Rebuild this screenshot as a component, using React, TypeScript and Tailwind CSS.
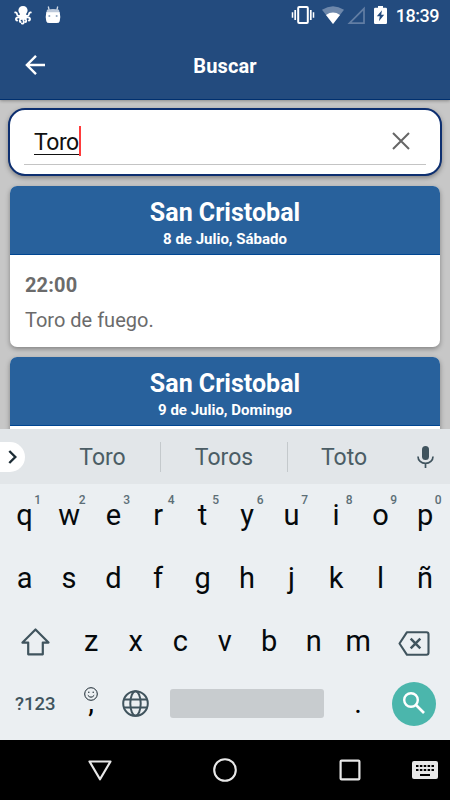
import React from 'react';

interface EventCardProps {
  title: string;
  date: string;
  time?: string;
  description?: string;
}

interface KeyProps {
  label: string;
  hint?: string;
}

const topRow = ['q', 'w', 'e', 'r', 't', 'y', 'u', 'i', 'o', 'p'];
const homeRow = ['a', 's', 'd', 'f', 'g', 'h', 'j', 'k', 'l', 'ñ'];
const bottomRow = ['z', 'x', 'c', 'v', 'b', 'n', 'm'];

const OctopusIcon = () => (
  <svg className="h-5 w-[18px]" viewBox="0 0 18 20" fill="none" stroke="#fff" strokeWidth="1.800" strokeLinecap="round">
    <path d="M9 1C6.200 1 4.400 3 4.400 5.300c0 1.700 1.100 2.700 1.500 4L4.300 12.500 7 15l2-.8 2 .8 2.700-2.500L12.100 9.300c.4-1.300 1.500-2.300 1.500-4C13.600 3 11.800 1 9 1z" fill="#fff" stroke="none" />
    <path d="M6 10.800C4 11.300 3 10.300 3 9c0-1-.6-1.700-1.800-1.500M12 10.800c2 .5 3-.5 3-1.800 0-1 .6-1.700 1.800-1.500" />
    <path d="M5.500 12.300c-1.500.3-2.500-.1-3.200.8-.8 1-.2 2.200.8 2.400M12.500 12.300c1.500.3 2.500-.1 3.200.8.800 1 .2 2.200-.8 2.400" />
    <path d="M6.600 13.500c0 1.200-.9 1.200-.9 2.200 0 .8.500 1.300 1 1.300M11.400 13.500c0 1.200.9 1.200.9 2.200 0 .8-.5 1.300-1 1.300" />
    <path d="M9 13c-.4 2 1.400 3.200.8 4.700-.3.800-1.200 1.200-2 .8" />
  </svg>
);

const RobotIcon = () => (
  <svg className="h-[18px] w-4" viewBox="0 0 16 18">
    <path d="M3.300.5l.9 4M12.700.5l-.9 4" stroke="#d3dbe6" strokeWidth="1.300" />
    <path d="M2 3.800Q8 2.200 14 3.800L14.700 7H1.300z" fill="#bdc9da" />
    <path d="M1.300 6.200h13.400q1.200 5 0 9-.4 1.900-3.200 1.900h-7q-2.800 0-3.200-1.900-1.200-4 0-9z" fill="#fff" />
    <path d="M3.500 9.300h1.700v1.500h-1.700zM10.800 9.300h1.700v1.500h-1.700z" fill="#7790b0" />
  </svg>
);

const StatusBar = () => (
  <div className="flex h-[30px] items-center justify-between pl-[13.500px] pr-[11px] text-white">
    <div className="flex items-center gap-[13px]">
      <OctopusIcon />
      <RobotIcon />
    </div>
    <div className="flex items-center">
      <svg className="-ml-px h-[18px] w-6" viewBox="0 0 24 18" fill="none" stroke="#fff">
        <rect x="7.200" y="1" width="9.600" height="16" rx="1" strokeWidth="2" />
        <path d="M4.200 4v10M19.800 4v10" strokeWidth="1.700" />
        <path d="M1.500 6.200v5.600M22.500 6.200v5.600" strokeWidth="1.500" />
      </svg>
      <svg className="ml-[7px] h-[18px] w-[22px]" viewBox="0 0 22 18">
        <path d="M11 18L0 3.800Q11-3.400 22 3.800z" fill="#6e88ab" />
        <path d="M11 18L4 8.900q7-4.800 14 0z" fill="#fff" />
      </svg>
      <svg className="ml-[3px] h-[18px] w-[18px]" viewBox="0 0 18 18">
        <path d="M2.500 17.100L17 2.600v14.500z" fill="none" stroke="#627ea4" strokeWidth="1.700" />
      </svg>
      <svg className="ml-[9px] h-[18px] w-[13px]" viewBox="0 0 13 18">
        <path d="M4 0h5v1.800h2.800q1.200 0 1.200 1.200v13.800Q13 18 11.800 18H1.200Q0 18 0 16.800V3q0-1.200 1.200-1.200H4z" fill="#fff" />
        <path d="M8 4.300L2.800 10.300h3l-.9 5L10.200 8.800H7.200z" fill="#234b7e" />
      </svg>
      <span className="ml-[9px] pt-px text-[18px] leading-[29px] font-medium tracking-[-0.500px]">18:39</span>
    </div>
  </div>
);

const Header = () => (
  <header className="relative z-10 h-[100px] shrink-0 border-b border-[#00306f] bg-[#234b7e] shadow-[0_1px_3px_rgba(0,0,0,0.3)]">
    <StatusBar />
    <div className="grid h-[70px] grid-cols-[100px_1fr_100px] items-center">
      <svg className="ml-[25px] h-5 w-5" viewBox="0 0 20 20" fill="none" stroke="#fff" strokeWidth="2.400">
        <path d="M20 10H2M11 .9L1.900 10l9.100 9.100" />
      </svg>
      <h1 className="pt-px text-center text-[20px] font-bold tracking-[0.100px] text-white">Buscar</h1>
    </div>
  </header>
);

const SearchField = () => (
  <div className="h-[68px] shrink-0 rounded-[17px] border-2 border-[#0d2f70] bg-white px-[14px] shadow-[0_2px_5px_rgba(0,0,0,0.35)]">
    <div className="flex h-[55px] items-center justify-between border-b border-[#c4c4c4] pr-[16px] pl-[10px]">
      <div className="flex items-center pt-[8px]">
        <span className="mt-[4px] border-b border-[#111] text-[23px] leading-[23px] tracking-[-0.400px] text-[#111]">Toro</span>
        <span className="h-[30px] w-[2px] bg-[#ff3b3b]" />
      </div>
      <svg className="mt-[8px] h-[18px] w-[18px]" viewBox="0 0 18 18" stroke="#666" strokeWidth="2">
        <path d="M1 1l16 16M17 1L1 17" />
      </svg>
    </div>
  </div>
);

const EventCard: React.FC<EventCardProps> = ({ title, date, time, description }) => (
  <article className="mx-[2px] h-[161px] shrink-0 overflow-hidden rounded-[7px] bg-white shadow-[0_2px_5px_rgba(0,0,0,0.35)]">
    <div className="h-[69px] border-b border-[#004691] bg-[#28619c] pt-[12px] text-center font-bold text-white">
      <h2 className="text-[25px] leading-[30px]">{title}</h2>
      <p className="text-[15px] leading-[23px]">{date}</p>
    </div>
    <div className="px-[15px] pt-[15px] text-[20px] text-[#6b6b6b]">
      <p className="leading-[30px] font-bold tracking-[0.150px]">{time}</p>
      <p className="mt-[5px] leading-[30px]">{description}</p>
    </div>
  </article>
);

const Suggestions = () => (
  <div className="flex h-[55px] items-center bg-[#e2e6e9] text-[23px] text-[#4b5d65]">
    <div className="flex h-[30px] w-[25px] items-center rounded-r-full bg-white pl-[8px]">
      <svg className="h-[14px] w-[10px]" viewBox="0 0 10 14" fill="none" stroke="#1c2c35" strokeWidth="2.400">
        <path d="M1.300 1l6 6-6 6" />
      </svg>
    </div>
    <span className="ml-[20px] w-[115px] pt-[4px] text-center">Toro</span>
    <span className="h-[30px] w-px bg-[#c4c9cc]" />
    <span className="w-[126px] pt-[4px] text-center">Toros</span>
    <span className="h-[30px] w-px bg-[#c4c9cc]" />
    <span className="w-[112px] pt-[4px] text-center">Toto</span>
    <svg className="ml-[17px] h-[22px] w-[17px]" viewBox="0 0 17 22" fill="none" stroke="#40545e">
      <rect x="5" y="0" width="7" height="14" rx="3.500" fill="#40545e" stroke="none" />
      <path d="M1 10.500c0 4 3.200 6.900 7.500 6.900s7.500-2.900 7.500-6.900M8.500 17.400V22" strokeWidth="1.700" />
    </svg>
  </div>
);

const Key: React.FC<KeyProps> = ({ label, hint }) => (
  <div className="relative w-[44.500px] text-center text-[29px] leading-[62px] text-[#05090c]">
    {label}
    {hint && <span className="absolute top-[9px] left-[32px] text-[12px] leading-[14px] font-medium text-[#5c6e76]">{hint}</span>}
  </div>
);

const Keyboard = () => (
  <section className="relative z-10 h-[311px] shrink-0 bg-[#ebeff2]">
    <Suggestions />
    <div className="flex h-[63px] pl-[2.300px]">
      {topRow.map((letter, i) => (
        <Key key={letter} label={letter} hint={String((i + 1) % 10)} />
      ))}
    </div>
    <div className="flex h-[63px] pl-[2.300px]">
      {homeRow.map((letter) => (
        <Key key={letter} label={letter} />
      ))}
    </div>
    <div className="flex h-[63px] items-start">
      <div className="flex h-[63px] w-[69px] items-center pl-[21px]">
        <svg className="mt-px h-[28px] w-[29px]" viewBox="0 0 29 28" fill="none" stroke="#40545e" strokeWidth="2.200" strokeLinejoin="round">
          <path d="M14.500 1.500L1.500 14.600h5.700v11.700h14.600V14.600h5.700z" />
        </svg>
      </div>
      {bottomRow.map((letter) => (
        <Key key={letter} label={letter} />
      ))}
      <div className="flex h-[63px] items-center pl-[17px]">
        <svg className="mt-[3px] h-[25px] w-[32px]" viewBox="0 0 32 25" fill="none" stroke="#40545e" strokeWidth="2.100" strokeLinejoin="round">
          <path d="M9 1.200h19.500q2 0 2 2v18.600q0 2-2 2H9L1.500 12.500z" />
          <path d="M12.700 7.700l9.600 9.600M22.300 7.700l-9.600 9.600" strokeWidth="2.500" />
        </svg>
      </div>
    </div>
    <div className="flex h-[67px] items-center">
      <span className="w-[71px] pb-[4px] pl-[15px] text-[18.500px] font-medium text-[#40545e]">?123</span>
      <div className="flex w-[40px] flex-col items-center pb-[11px]">
        <svg className="h-[14px] w-[14px]" viewBox="0 0 14 14" fill="none" stroke="#17252e" strokeWidth="1">
          <circle cx="7" cy="7" r="6.300" />
          <path d="M3.800 8.300q3.200 3.800 6.400 0" />
          <circle cx="4.800" cy="5.300" r=".7" fill="#17252e" stroke="none" />
          <circle cx="9.200" cy="5.300" r=".7" fill="#17252e" stroke="none" />
        </svg>
        <span className="h-[14px] text-[29px] leading-[3px] text-black">,</span>
      </div>
      <svg className="mb-[6px] ml-[11px] h-[27px] w-[27px]" viewBox="0 0 27 27" fill="none" stroke="#40545e" strokeWidth="2">
        <circle cx="13.500" cy="13.500" r="12.300" />
        <ellipse cx="13.500" cy="13.500" rx="5.200" ry="12.300" />
        <path d="M2 9.400h23M2 17.600h23" />
      </svg>
      <div className="mb-[6px] ml-[21px] h-[29px] w-[154px] rounded-[3px] bg-[#c8cccf]" />
      <span className="ml-[12px] w-[44px] pb-[5px] text-center text-[29px] text-black">.</span>
      <button className="mb-[6px] ml-[12px] flex h-[44px] w-[44px] items-center justify-center rounded-full bg-[#4bb6ac]" aria-label="Buscar">
        <svg className="mb-px h-[22px] w-[22px]" viewBox="0 0 22 22" fill="none" stroke="#fff">
          <circle cx="8" cy="8" r="6.800" strokeWidth="2.400" />
          <path d="M13 13l8 8" strokeWidth="2.700" />
        </svg>
      </button>
    </div>
  </section>
);

const NavBar = () => (
  <nav className="flex h-[60px] shrink-0 items-center bg-black pl-[88px]">
    <svg className="h-[21px] w-[24px]" viewBox="0 0 24 21" fill="none" stroke="#e8e8e8" strokeWidth="2.200" strokeLinejoin="round">
      <path d="M1.500 1.500h21L12 19.300z" />
    </svg>
    <svg className="ml-[101px] h-[24px] w-[24px]" viewBox="0 0 24 24" fill="none" stroke="#e8e8e8" strokeWidth="2.100">
      <circle cx="12" cy="12" r="10.800" />
    </svg>
    <svg className="ml-[102px] h-[22px] w-[22px]" viewBox="0 0 22 22" fill="none" stroke="#e8e8e8" strokeWidth="2.200">
      <rect x="1.600" y="1.600" width="18.800" height="18.800" rx="1" />
    </svg>
    <svg className="ml-[51px] h-[18px] w-[26px]" viewBox="0 0 26 18">
      <rect width="26" height="18" rx="2" fill="#e8e8e8" />
      <path d="M4 5h18M4 9h18" stroke="#000" strokeWidth="2" strokeDasharray="2.500 1.370" />
      <path d="M8 14h10" stroke="#000" strokeWidth="2" />
    </svg>
  </nav>
);

const App: React.FC = () => {
  return (
    <div className="flex h-[800px] w-[450px] flex-col overflow-hidden bg-[#c7c7c7] font-['Roboto',sans-serif]">
      <Header />
      <main className="flex h-[329px] shrink-0 flex-col gap-[10px] overflow-hidden px-[8px] pt-[8px]">
        <SearchField />
        <EventCard title="San Cristobal" date="8 de Julio, Sábado" time="22:00" description="Toro de fuego." />
        <EventCard title="San Cristobal" date="9 de Julio, Domingo" />
      </main>
      <Keyboard />
      <NavBar />
    </div>
  );
};

export default App;
